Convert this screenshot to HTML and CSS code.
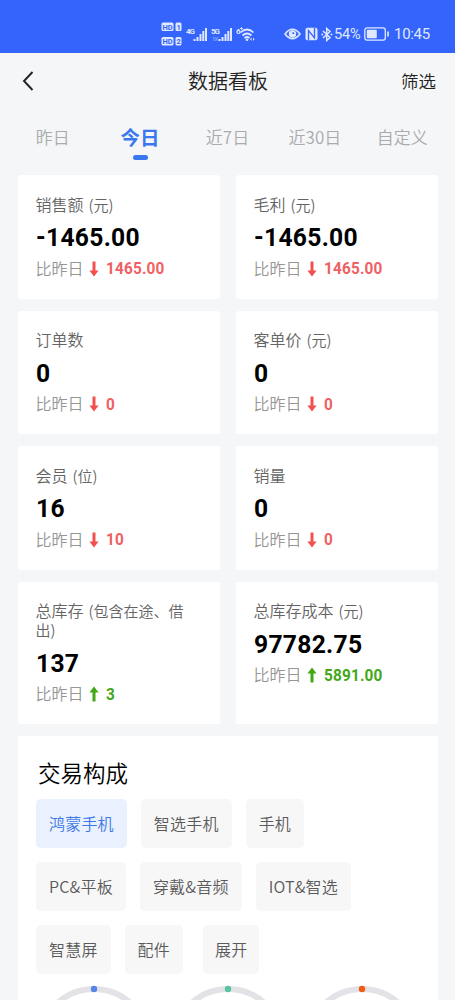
FILE: index.html
```html
<!DOCTYPE html>
<html lang="zh-CN">
<head>
<meta charset="utf-8">
<title>数据看板</title>
<link rel="stylesheet" href="styles.css">
</head>
<body>
<div class="status">
  <svg class="hd" width="22" height="25" viewBox="0 0 22 25"><g fill="#dfe8ff"><rect x=".5" y=".5" width="12" height="8.5" rx="1.5"/><rect x="14.500" y=".5" width="6" height="8.500" rx="1.500"/><rect x=".5" y="15" width="12" height="8.500" rx="1.500"/><rect x="14.500" y="15" width="6" height="8.500" rx="1.500"/></g><g class="hd-text"><text x="1.500" y="7.500">HD</text><text x="15.500" y="7.500">1</text><text x="1.500" y="22">HD</text><text x="15.500" y="22">2</text></g></svg>
  <svg class="signal" width="22" height="17" viewBox="0 0 22 17"><text class="net" x="0" y="8">4G</text><g fill="#dfe8ff"><rect x="7.500" y="13" width="2" height="2"/><rect x="10.500" y="11" width="2" height="4"/><rect x="13.500" y="8" width="2" height="7"/><rect x="16.300" y="5" width="2" height="10"/><rect x="19" y="2" width="2" height="13"/></g></svg>
  <svg class="signal" width="22" height="17" viewBox="0 0 22 17"><text class="net" x="0" y="8">5G</text><text class="net dim" x="1" y="15">1X</text><g fill="#dfe8ff"><rect x="7.500" y="13" width="2" height="2"/><rect x="10.500" y="11" width="2" height="4"/><rect x="13.500" y="8" width="2" height="7"/><rect x="16.300" y="5" width="2" height="10"/><rect x="19" y="2" width="2" height="13"/></g></svg>
  <svg class="wifi" width="20" height="17" viewBox="0 0 20 17"><text class="net" x="0" y="8">6</text><path d="M4 2.500h3M5.500 1v3" stroke="#dfe8ff" stroke-width=".8"/><g fill="none" stroke="#dfe8ff" stroke-width="1.700"><path d="M4.500 6.500Q11 .5 17.500 6.500M6.500 9.500Q11 5.500 15.500 9.500M8.500 12Q11 10 13.500 12"/></g><circle cx="11" cy="13.700" r="1.300" fill="#dfe8ff"/><path d="M15.500 11.500l-1.500 1.700 1.500 1.700zM17 11.500l1.500 1.700-1.500 1.700z" fill="#dfe8ff"/></svg>
  <svg class="eye" width="17" height="12" viewBox="0 0 17 12"><path d="M1 6Q8.500-3.500 16 6Q8.500 15.500 1 6Z" fill="none" stroke="#dfe8ff" stroke-width="1.700"/><circle cx="8.500" cy="6" r="3.700" fill="#dfe8ff"/><path d="M8.500 6V4A2 2 0 0 1 10.500 6z" fill="#3564fc"/></svg>
  <svg class="nfc" width="13" height="14" viewBox="0 0 13 14"><rect x=".5" y=".8" width="12" height="12.400" rx="2" fill="#dfe8ff"/><path d="M3.500 13V3.500L9.500 11V1" fill="none" stroke="#3564fc" stroke-width="1.300"/></svg>
  <svg class="bt" width="12" height="15" viewBox="0 0 12 15"><path d="M2 4l7 6.500-3.300 3V1.500L9 4.500 2 11" fill="none" stroke="#dfe8ff" stroke-width="1.500"/><circle cx="1.300" cy="7.500" r="1" fill="#dfe8ff"/><circle cx="10.500" cy="7.500" r="1" fill="#dfe8ff"/></svg>
  <span class="percent">54%</span>
  <svg class="battery" width="26" height="14" viewBox="0 0 26 14"><rect x=".8" y=".8" width="20.500" height="12.400" rx="2.500" fill="none" stroke="#dfe8ff" stroke-width="1.300"/><rect x="2.800" y="2.800" width="10" height="8.400" rx="1" fill="#dfe8ff"/><path d="M24 4.500v5" stroke="#dfe8ff" stroke-width="1.700"/></svg>
  <span class="clock">10:45</span>
</div>
<header class="nav">
  <svg width="12" height="20" viewBox="0 0 12 20"><path d="M10.500 1L2 10l8.500 9" fill="none" stroke="#222" stroke-width="1.900"/></svg>
  <h1>数据看板</h1>
  <span class="filter">筛选</span>
</header>
<nav class="tabs">
  <span>昨日</span><span class="active">今日</span><span>近7日</span><span>近30日</span><span>自定义</span>
</nav>
<main>
  <section class="cards">
    <article><h2>销售额 <small>(元)</small></h2><strong>-1465.00</strong><p class="down"><span>比昨日</span><svg width="10" height="16" viewBox="0 0 10 16"><path d="M3.500 .5h3v9H9.600L5 15.500 .4 9.500H3.500z"/></svg><b>1465.00</b></p></article>
    <article><h2>毛利 <small>(元)</small></h2><strong>-1465.00</strong><p class="down"><span>比昨日</span><svg width="10" height="16" viewBox="0 0 10 16"><path d="M3.500 .5h3v9H9.600L5 15.500 .4 9.500H3.500z"/></svg><b>1465.00</b></p></article>
    <article><h2>订单数</h2><strong>0</strong><p class="down"><span>比昨日</span><svg width="10" height="16" viewBox="0 0 10 16"><path d="M3.500 .5h3v9H9.600L5 15.500 .4 9.500H3.500z"/></svg><b>0</b></p></article>
    <article><h2>客单价 <small>(元)</small></h2><strong>0</strong><p class="down"><span>比昨日</span><svg width="10" height="16" viewBox="0 0 10 16"><path d="M3.500 .5h3v9H9.600L5 15.500 .4 9.500H3.500z"/></svg><b>0</b></p></article>
    <article><h2>会员 <small>(位)</small></h2><strong>16</strong><p class="down"><span>比昨日</span><svg width="10" height="16" viewBox="0 0 10 16"><path d="M3.500 .5h3v9H9.600L5 15.500 .4 9.500H3.500z"/></svg><b>10</b></p></article>
    <article><h2>销量</h2><strong>0</strong><p class="down"><span>比昨日</span><svg width="10" height="16" viewBox="0 0 10 16"><path d="M3.500 .5h3v9H9.600L5 15.500 .4 9.500H3.500z"/></svg><b>0</b></p></article>
    <article><h2>总库存 <small>(包含在途、借出)</small></h2><strong>137</strong><p class="up"><span>比昨日</span><svg width="10" height="16" viewBox="0 0 10 16"><path d="M3.500 15.500h3V6.500H9.600L5 .5 .4 6.500H3.500z"/></svg><b>3</b></p></article>
    <article><h2>总库存成本 <small>(元)</small></h2><strong>97782.75</strong><p class="up"><span>比昨日</span><svg width="10" height="16" viewBox="0 0 10 16"><path d="M3.500 15.500h3V6.500H9.600L5 .5 .4 6.500H3.500z"/></svg><b>5891.00</b></p></article>
  </section>
  <section class="panel">
    <h3>交易构成</h3>
    <div class="chips"><span class="selected">鸿蒙手机</span><span>智选手机</span><span>手机</span></div>
    <div class="chips"><span>PC&amp;平板</span><span>穿戴&amp;音频</span><span>IOT&amp;智选</span></div>
    <div class="chips"><span>智慧屏</span><span>配件</span><span class="expand">展开</span></div>
    <div class="rings">
      <svg width="120" height="17" viewBox="0 0 120 17"><circle class="track" cx="60" cy="60" r="54"/><circle cx="60" cy="6" r="3.200" fill="#5684e8"/></svg>
      <svg width="120" height="17" viewBox="0 0 120 17"><circle class="track" cx="60" cy="60" r="54"/><circle cx="60" cy="6" r="3.200" fill="#55c4a0"/></svg>
      <svg width="120" height="17" viewBox="0 0 120 17"><circle class="track" cx="60" cy="60" r="54"/><circle cx="60" cy="6" r="3.200" fill="#f15b14"/></svg>
    </div>
  </section>
</main>
</body>
</html>
```

FILE: styles.css
```css
* { box-sizing: border-box; }
body {
  margin: 0;
  width: 455px;
  height: 1000px;
  overflow: hidden;
  background: #f5f6f7;
  font-family: "Noto Sans CJK SC", sans-serif;
  font-weight: 350;
}
svg { display: block; flex: none; }
h1, h2, h3, p { margin: 0; font-weight: 350; }

.status {
  display: flex;
  align-items: center;
  height: 53px;
  padding: 15px 0 0 161px;
  background: #3564fc;
  color: #dfe8ff;
  font-family: Roboto, sans-serif;
  font-size: 15px;
  font-weight: 400;
  white-space: nowrap;
}
.hd-text { font: bold 7.5px Roboto, sans-serif; fill: #3564fc; }
.net { font: bold 8px Roboto, sans-serif; letter-spacing: -1px; fill: #dfe8ff; }
.dim { fill: #7a9dff; font-size: 6px; }
.signal { margin-left: 3px; }
.wifi { margin-left: 3px; }
.eye { margin-left: 28px; }
.nfc { margin-left: 4px; }
.bt { margin-left: 3px; }
.percent { margin-left: 1px; width: 28px; font-size: 14.5px; letter-spacing: -.2px; }
.battery { margin-left: 2px; }
.clock { margin-left: 4px; letter-spacing: -.3px; }

.nav {
  display: grid;
  grid-template-columns: 60px 1fr 60px;
  align-items: center;
  height: 56px;
  padding: 0 19px 0 22px;
  color: #222;
}
.nav h1 { font-size: 20px; line-height: 30px; text-align: center; padding-right: 2px; }
.filter { font-size: 17.500px; line-height: 26px; text-align: right; }

.tabs {
  display: grid;
  grid-template-columns: repeat(5, 1fr);
  height: 66px;
  padding: 15px 9px 0;
  color: #a9abad;
  font-size: 17px;
  line-height: 25px;
  text-align: center;
}
.tabs .active { color: #3b78ef; font-size: 19.500px; font-weight: 700; }
.active::after {
  content: "";
  display: block;
  width: 15px;
  height: 5px;
  margin: 6px auto 0;
  border-radius: 3px;
  background: #3b78ef;
}

main { padding: 0 17px 0 18px; }
.cards {
  display: grid;
  grid-template-columns: 202px 202px;
  grid-template-rows: 123.5px 123.5px 123.5px 142px;
  gap: 12px 16px;
}
.cards article { padding: 19.500px 24px 0 17.500px; background: #fff; border-radius: 3px; }
.cards h2 { color: #646464; font-size: 16px; line-height: 19px; }
.cards small { margin-left: 1.500px; font-size: 15px; }
.cards strong {
  display: block;
  margin-top: 6.500px;
  color: #000;
  font-family: Roboto, sans-serif;
  font-size: 26.500px;
  font-weight: 700;
  line-height: 34px;
  letter-spacing: .3px;
  transform: scaleX(.93);
  transform-origin: left;
}
.cards p {
  display: flex;
  align-items: center;
  height: 20px;
  margin-top: 4.500px;
  color: #969696;
  font-size: 16px;
}
.cards p span { line-height: 18px; padding-bottom: 2px; }
.cards p svg { margin-left: 5px; fill: currentColor; }
.cards b {
  margin-left: 7px;
  font-family: Roboto, sans-serif;
  font-size: 16.500px;
  letter-spacing: .2px;
  transform: scaleX(.93);
  transform-origin: left;
}
.down svg { color: #f1524f; }
.down b { color: #ef6164; }
.up svg, .up b { color: #43a817; }

.panel {
  height: 264px;
  margin-top: 12px;
  padding: 20.500px 0 0;
  background: #fff;
  border-radius: 3px;
}
.panel h3 { padding-left: 20px; color: #000; font-size: 22.500px; line-height: 32px; }
.chips { display: flex; gap: 14px; height: 49px; margin: 14px 0 0 18px; }
.panel h3 + .chips { margin-top: 11px; }
.chips span {
  padding: 0 13px;
  border-radius: 5px;
  background: #f8f7f8;
  color: #5a5a5a;
  font-size: 16px;
  letter-spacing: .2px;
  line-height: 49px;
}
.chips .selected { background: #eaf1fe; color: #3b78e5; }
.chips .expand { margin-left: 6px; padding: 0 12px; }
.rings {
  display: grid;
  grid-template-columns: repeat(3, 1fr);
  justify-items: center;
  padding: 9px 9px 0;
  height: 26px;
  overflow: hidden;
}
.track { fill: none; stroke: #e3e3e7; stroke-width: 6; }
```
